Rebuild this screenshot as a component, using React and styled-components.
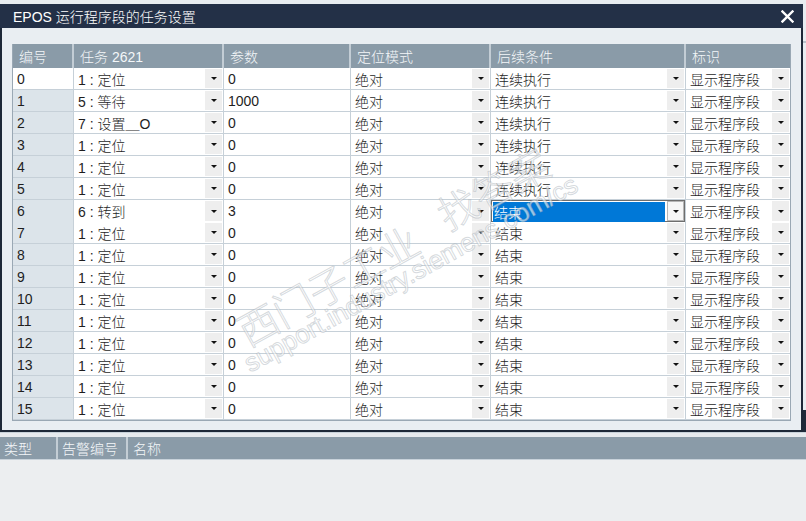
import React from 'react';
import styled, { createGlobalStyle } from 'styled-components';

const GlobalStyle = createGlobalStyle`
    body {
        margin: 0;
        background: #eceef0;
        font-family: "Liberation Sans", "Noto Sans CJK SC", sans-serif;
    }
`;

const Page = styled.div`
    position: relative;
    width: 806px;
    height: 521px;
    overflow: hidden;
    display: flex;
    flex-direction: column;
    background: #eceef0;
`;

const TopStrip = styled.div`
    height: 4px;
    background: #e8edf1;
`;

const DialogRow = styled.div`
    display: flex;
`;

const Dialog = styled.div`
    width: 803px;
    display: flex;
    flex-direction: column;
`;

const SideStrip = styled.div`
    flex: 1;
    display: flex;
    flex-direction: column;
    background: #e8edf1;
`;

const SideLine = styled.div`
    height: 2px;
    margin-top: 37px;
    background: #b8c2ca;
`;

const SideDark = styled.div`
    margin-top: auto;
    height: 22px;
    background: #1f2a3a;
`;

const TitleBar = styled.div`
    height: 24px;
    display: flex;
    align-items: center;
    justify-content: space-between;
    padding: 0 9px 0 13px;
    background: #233047;
    color: #ffffff;
    font-size: 14px;
    font-weight: 300;
`;

const CloseButton = styled.div`
    width: 14px;
    height: 14px;
    display: flex;
    align-items: center;
    justify-content: center;
`;

const Body = styled.div`
    padding: 16px 10px 9px 10px;
    background: #e9eef2;
    border: 2px solid #1d2838;
    border-top: none;
`;

const Table = styled.div`
    border: 1px solid #9aa8b4;
    border-top: none;
    background: #ffffff;
`;

const COLS = '61px 150px 127px 140px 195px 104px';

const HeaderRow = styled.div`
    display: grid;
    grid-template-columns: ${COLS};
    height: 24px;
    background: #8a9ba8;
`;

const HeaderCell = styled.div`
    display: flex;
    align-items: center;
    padding-left: 6px;
    color: #f4f7f9;
    font-size: 14px;
    font-weight: 300;
    border-right: 2px solid #c3cdd5;
    &:last-child {
        border-right: none;
    }
`;

const Row = styled.div`
    display: grid;
    grid-template-columns: ${COLS};
    height: 22px;
`;

const Cell = styled.div`
    display: flex;
    align-items: center;
    justify-content: space-between;
    padding-left: ${({ $selected }) => ($selected ? '0' : '4px')};
    color: #1e1e1e;
    font-size: 14px;
    font-weight: 300;
    background: ${({ $index, $head }) => ($head ? ($index ? '#dce4ea' : '#ffffff') : '#ffffff')};
    border-right: 1px solid #c6d0d8;
    border-bottom: 1px solid #c6d0d8;
    box-shadow: ${({ $selected }) => ($selected ? 'inset 0 0 0 1px #6e6e6e' : 'none')};
    white-space: nowrap;
    &:last-child {
        border-right: none;
    }
`;

const SelectedText = styled.div`
    flex: 1;
    align-self: stretch;
    margin: 2px 2px 0 2px;
    padding-left: 1px;
    display: flex;
    align-items: center;
    background: #0078d7;
    color: #ffffff;
`;

const ArrowBox = styled.div`
    width: 17px;
    align-self: stretch;
    margin: 1px 1px 1px 0;
    display: flex;
    align-items: center;
    justify-content: center;
    background: ${({ $framed }) => ($framed ? '#f6f6f6' : '#eeeeee')};
    box-shadow: ${({ $framed }) => ($framed ? 'inset 0 0 0 1px #b5b5b5' : 'none')};
    &::after {
        content: '';
        border-left: 3px solid transparent;
        border-right: 3px solid transparent;
        border-top: 3px solid #111111;
    }
`;

const Gap = styled.div`
    height: 4px;
    background: #e6eaee;
    border-top: 1px solid #c8d2da;
`;

const AlarmHeader = styled.div`
    display: grid;
    grid-template-columns: 58px 70px 1fr;
    height: 22px;
    background: #8a9ba8;
`;

const AlarmCell = styled.div`
    display: flex;
    align-items: center;
    padding-left: ${({ $pad }) => $pad}px;
    color: #f4f7f9;
    font-size: 14px;
    font-weight: 300;
    border-right: 2px solid #c3cdd5;
    &:last-child {
        border-right: none;
    }
`;

const AlarmBody = styled.div`
    flex: 1;
    background: #eceef0;
    border-top: 1px solid #c8d2da;
`;

const Watermark = styled.div`
    position: absolute;
    left: ${({ $x }) => $x}px;
    top: ${({ $y }) => $y}px;
    font-size: ${({ $size }) => $size}px;
    line-height: 1;
    font-family: ${({ $latin }) => ($latin ? '"Liberation Sans", sans-serif' : '"Noto Sans CJK SC", sans-serif')};
    font-weight: ${({ $latin }) => ($latin ? 400 : 300)};
    color: rgba(255, 255, 255, 0.6);
    -webkit-text-stroke: 1px rgba(150, 160, 170, 0.4);
    transform: rotate(-29deg);
    transform-origin: left center;
    white-space: nowrap;
    pointer-events: none;
`;

const columns = ['编号', '任务 2621', '参数', '定位模式', '后续条件', '标识'];

const rows = [
    ['1 : 定位', '0', '连续执行'],
    ['5 : 等待', '1000', '连续执行'],
    ['7 : 设置＿O', '0', '连续执行'],
    ['1 : 定位', '0', '连续执行'],
    ['1 : 定位', '0', '连续执行'],
    ['1 : 定位', '0', '连续执行'],
    ['6 : 转到', '3', '结束'],
    ['1 : 定位', '0', '结束'],
    ['1 : 定位', '0', '结束'],
    ['1 : 定位', '0', '结束'],
    ['1 : 定位', '0', '结束'],
    ['1 : 定位', '0', '结束'],
    ['1 : 定位', '0', '结束'],
    ['1 : 定位', '0', '结束'],
    ['1 : 定位', '0', '结束'],
    ['1 : 定位', '0', '结束'],
];

function CloseIcon() {
    return (
        <svg width="13" height="13" viewBox="0 0 13 13">
            <path d="M1.5 1.5 L11.5 11.5 M11.5 1.5 L1.5 11.5" stroke="#ffffff" strokeWidth="2.4" strokeLinecap="square" />
        </svg>
    );
}

export default function App() {
    const selectedRow = 6;

    return (
        <>
            <GlobalStyle />
            <Page>
                <TopStrip />
                <DialogRow>
                    <Dialog>
                        <TitleBar>
                            <span>EPOS 运行程序段的任务设置</span>
                            <CloseButton><CloseIcon /></CloseButton>
                        </TitleBar>
                        <Body>
                            <Table>
                                <HeaderRow>
                                    {columns.map((c) => (
                                        <HeaderCell key={c}>{c}</HeaderCell>
                                    ))}
                                </HeaderRow>
                                {rows.map(([task, param, next], i) => (
                                    <Row key={i}>
                                        <Cell $head $index={i}>{i}</Cell>
                                        <Cell>{task}<ArrowBox /></Cell>
                                        <Cell>{param}</Cell>
                                        <Cell>绝对<ArrowBox /></Cell>
                                        {i === selectedRow ? (
                                            <Cell $selected>
                                                <SelectedText>{next}</SelectedText>
                                                <ArrowBox $framed />
                                            </Cell>
                                        ) : (
                                            <Cell>{next}<ArrowBox /></Cell>
                                        )}
                                        <Cell>显示程序段<ArrowBox /></Cell>
                                    </Row>
                                ))}
                            </Table>
                        </Body>
                    </Dialog>
                    <SideStrip>
                        <SideLine />
                        <SideDark />
                    </SideStrip>
                </DialogRow>
                <Gap />
                <AlarmHeader>
                    <AlarmCell $pad={4}>类型</AlarmCell>
                    <AlarmCell $pad={4}>告警编号</AlarmCell>
                    <AlarmCell $pad={5}>名称</AlarmCell>
                </AlarmHeader>
                <AlarmBody />

                <Watermark $x={240} $y={313} $size={40}>西门子工业</Watermark>
                <Watermark $x={246} $y={352} $size={26} $latin>support.industry.siemens.com/cs</Watermark>
                <Watermark $x={440} $y={197} $size={40}>找答案</Watermark>
            </Page>
        </>
    );
}
